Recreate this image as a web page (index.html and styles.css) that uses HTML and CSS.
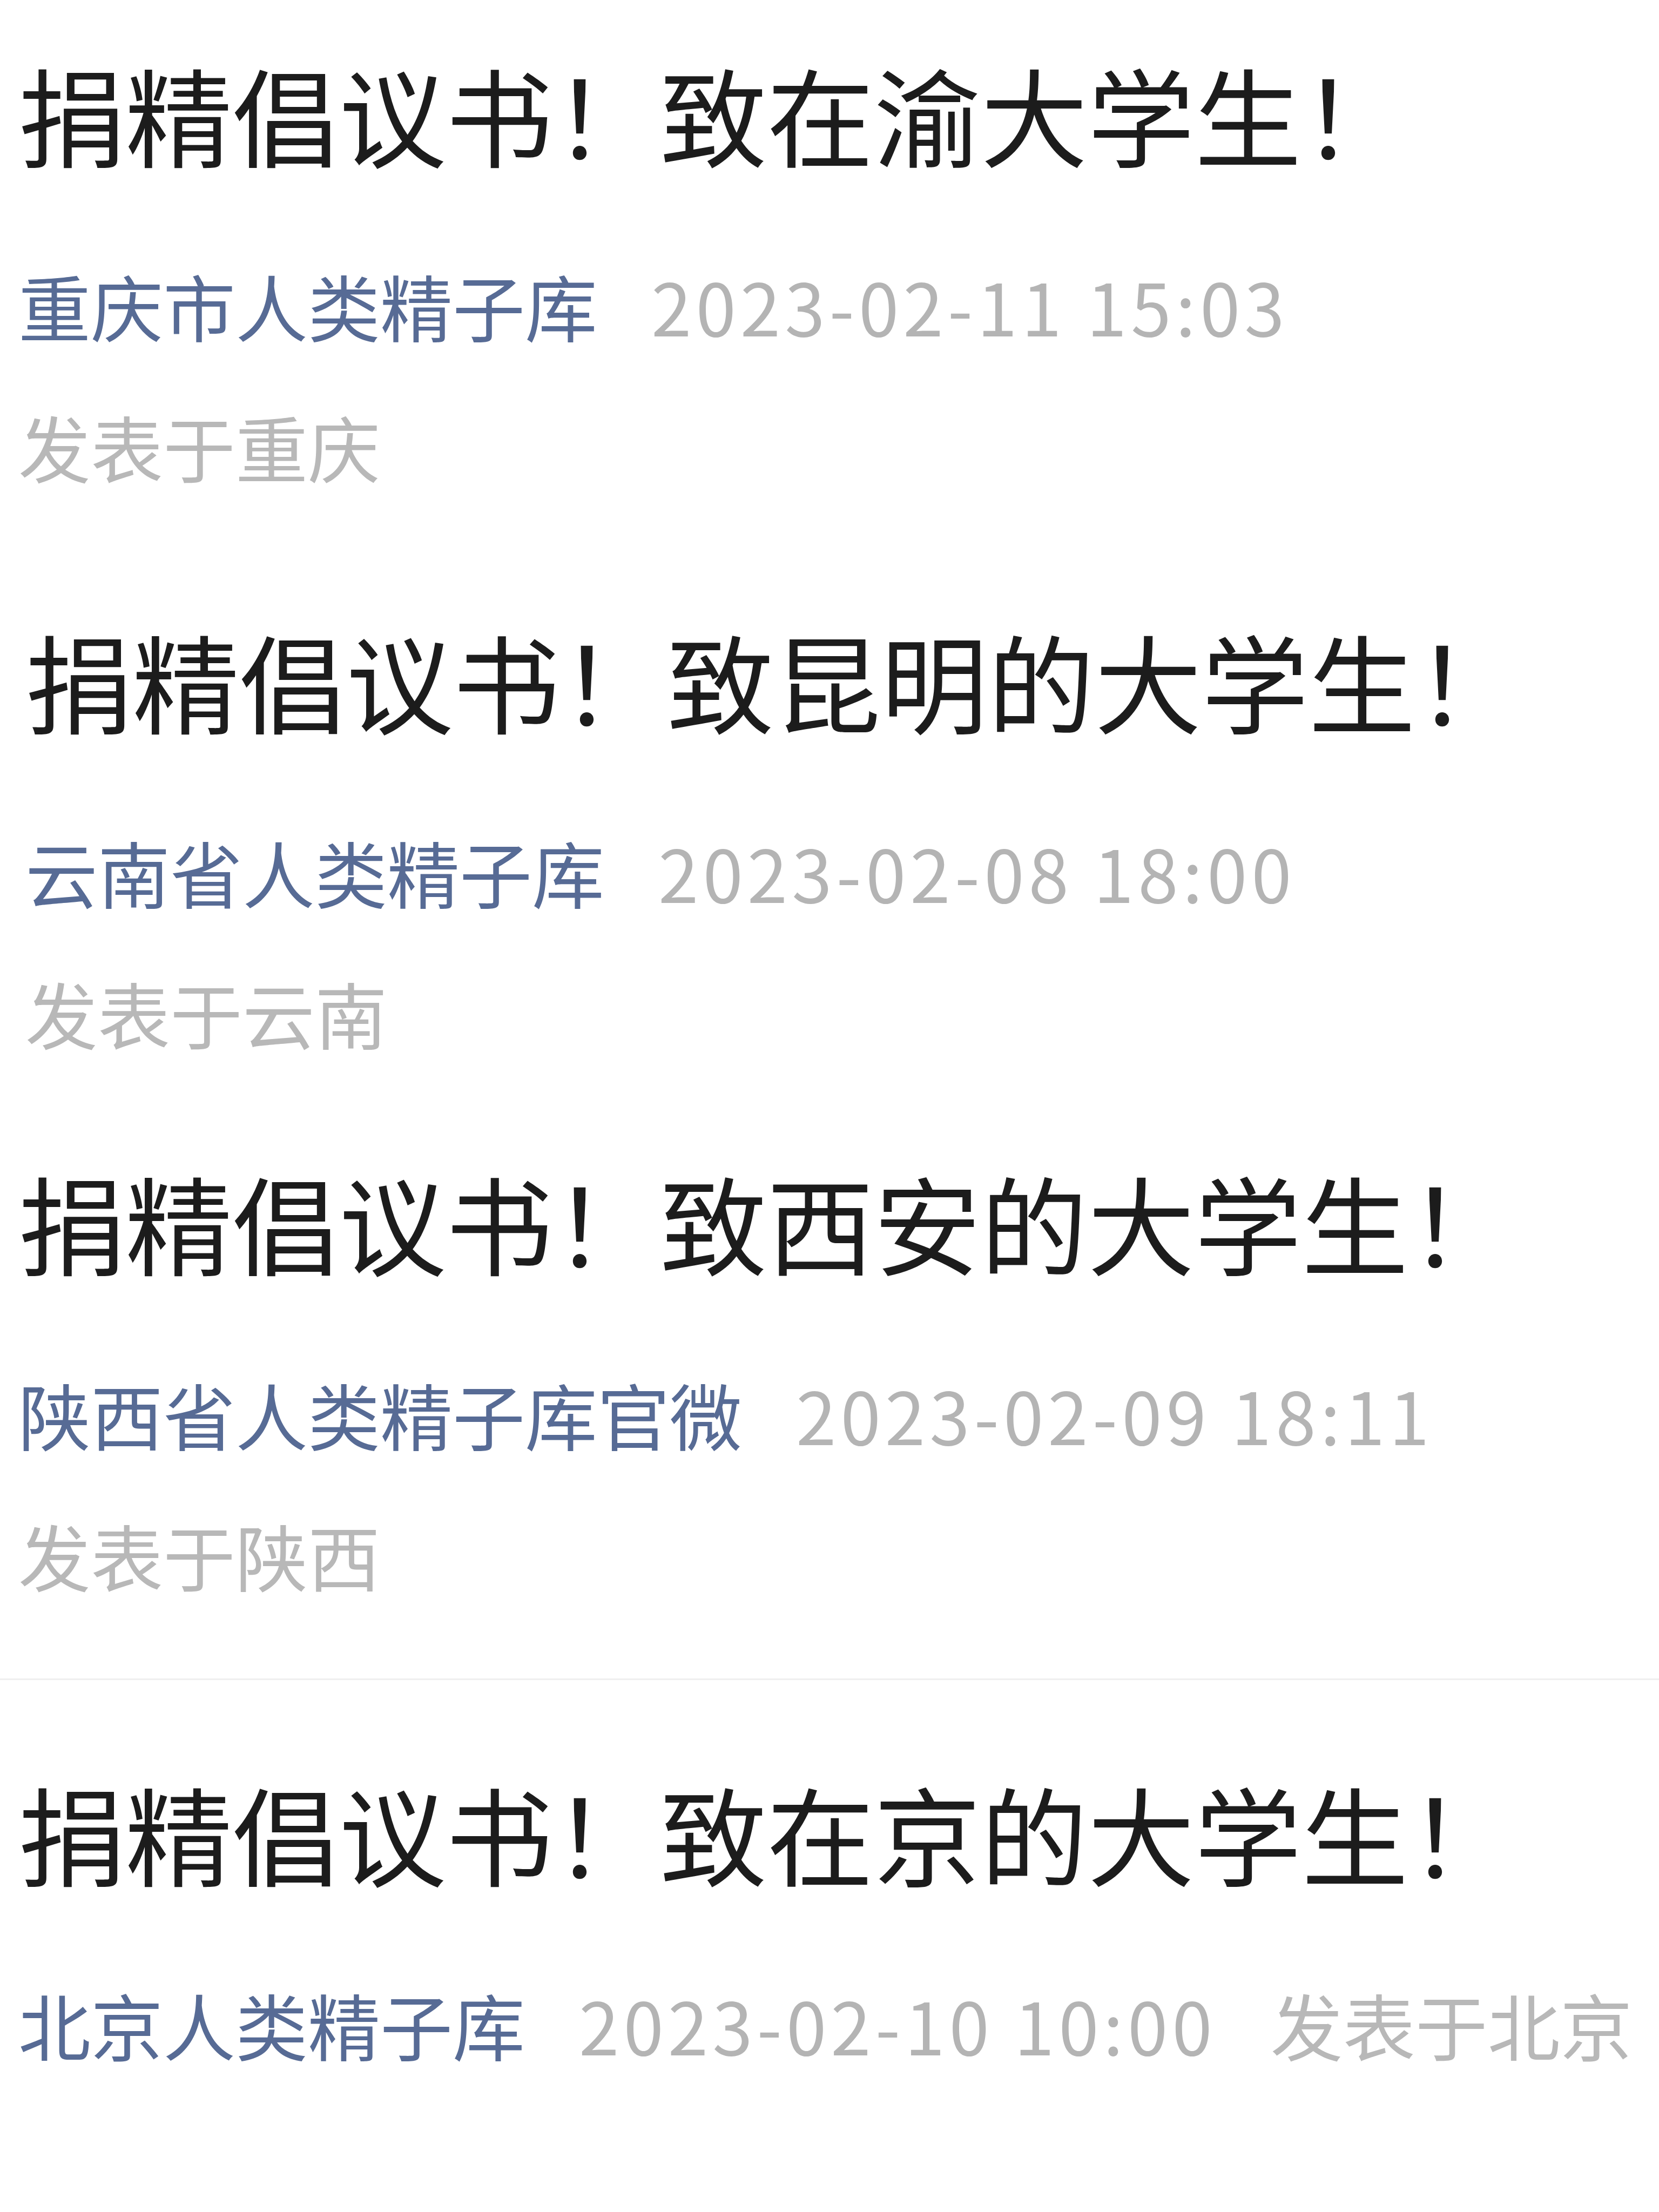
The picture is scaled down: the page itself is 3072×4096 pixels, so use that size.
FILE: index.html
```html
<!DOCTYPE html>
<html lang="zh-CN">
<head>
  <meta charset="UTF-8">
  <title>捐精倡议书</title>
  <link rel="stylesheet" href="styles.css">
</head>
<body>

  <div class="article-list">

    <!-- 重庆 -->
    <div class="article article--loose">
      <h1 class="title">捐精倡议书！致在渝大学生！</h1>
      <div class="meta">
        <span class="author">重庆市人类精子库</span>
        <span class="date">2023-02-11 15:03</span>
        <span class="place">发表于重庆</span>
      </div>
    </div>

    <!-- 云南 -->
    <div class="article article--inset">
      <h1 class="title">捐精倡议书！致昆明的大学生！</h1>
      <div class="meta">
        <span class="author">云南省人类精子库</span>
        <span class="date">2023-02-08 18:00</span>
        <span class="place">发表于云南</span>
      </div>
    </div>

    <!-- 陕西 -->
    <div class="article article--before-line">
      <h1 class="title">捐精倡议书！致西安的大学生！</h1>
      <div class="meta">
        <span class="author">陕西省人类精子库官微</span>
        <span class="date">2023-02-09 18:11</span>
        <span class="place">发表于陕西</span>
      </div>
    </div>

    <div class="divider"></div>

    <!-- 北京 -->
    <div class="article">
      <h1 class="title">捐精倡议书！致在京的大学生！</h1>
      <div class="meta">
        <span class="author">北京人类精子库</span>
        <span class="date">2023-02-10 10:00</span>
        <span class="place">发表于北京</span>
      </div>
    </div>

  </div>

</body>
</html>
```

FILE: styles.css
```css
html, body {
  margin: 0;
  padding: 0;
  background-color: #ffffff;
  font-family: "Noto Sans CJK SC", "Noto Sans", sans-serif;
}

.article-list {
  padding-top: 70px;
}

.article {
  padding: 0 34px 146px;
}

.article--loose {
  padding-bottom: 192px;
}

.article--inset {
  padding-left: 47px;
}

.article--before-line {
  padding-bottom: 128px;
}

.title {
  margin: 0 0 118px;
  font-size: 198px;
  font-weight: 400;
  line-height: 1.4;
  color: #1c1c1c;
}

/* author / date / place wrap onto a second line when they don't fit */
.meta {
  display: flex;
  flex-wrap: wrap;
  column-gap: 100px;
  row-gap: 60px;
  font-size: 134px;
  line-height: 1.5;
}

.author {
  color: #576b95;
}

.date {
  color: #b4b4b4;
  letter-spacing: 8px;
}

.place {
  color: #b8b8b8;
}

.divider {
  height: 3px;
  background-color: #efefef;
  margin-bottom: 142px;
}
```
